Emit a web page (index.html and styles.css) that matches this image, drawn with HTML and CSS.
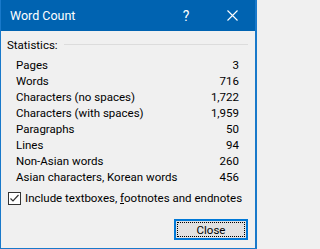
FILE: index.html
```html
<!DOCTYPE html>
<html>
<head>
<meta charset="utf-8">
<link rel="stylesheet" href="styles.css">
</head>
<body>
<div class="window">
  <div class="titlebar">
    <div class="title">Word Count</div>
    <div class="tb-btn help">?</div>
    <div class="tb-btn close">
      <svg width="11" height="11" viewBox="0 0 11 11"><path d="M0.5 0.5 L10.5 10.5 M10.5 0.5 L0.5 10.5" stroke="#fff" stroke-width="1.1" fill="none"/></svg>
    </div>
  </div>
  <div class="content">
    <div class="group-header"><span>Statistics:</span><div class="rule"></div></div>
    <div class="stats">
      <div class="row"><span>Pages</span><span>3</span></div>
      <div class="row"><span>Words</span><span>716</span></div>
      <div class="row"><span>Characters (no spaces)</span><span>1,722</span></div>
      <div class="row"><span>Characters (with spaces)</span><span>1,959</span></div>
      <div class="row"><span>Paragraphs</span><span>50</span></div>
      <div class="row"><span>Lines</span><span>94</span></div>
      <div class="row"><span>Non-Asian words</span><span>260</span></div>
      <div class="row"><span>Asian characters, Korean words</span><span>456</span></div>
    </div>
    <div class="check-row">
      <div class="checkbox">
        <svg width="11" height="11" viewBox="0 0 11 11"><path d="M1.5 5.5 L4 8 L9.5 2" stroke="#333" stroke-width="1.2" fill="none"/></svg>
      </div>
      <span class="check-label">Include textboxes, <u>f</u>ootnotes and endnotes</span>
    </div>
    <div class="footer">
      <div class="button"><div class="focus">Close</div></div>
    </div>
  </div>
</div>
</body>
</html>
```

FILE: styles.css
```css
html, body {
  margin: 0;
  padding: 0;
  background: #f0f0f0;
}
body {
  font-family: Roboto, "Noto Sans", sans-serif;
  font-size: 11.5px;
  color: #000;
}
.window {
  width: 257px;
  height: 249px;
  box-sizing: border-box;
  border-left: 1px solid #1979ca;
  border-right: 2px solid #1979ca;
  border-bottom: 1px solid #1979ca;
  background: #f0f0f0;
  display: flex;
  flex-direction: column;
  overflow: hidden;
}
.titlebar {
  height: 31px;
  background: #0063b1;
  color: #fff;
  display: flex;
  align-items: center;
  flex-shrink: 0;
}
.title {
  flex: 1;
  padding-left: 9px;
  font-size: 12.5px;
  line-height: 16px;
}
.tb-btn {
  width: 46px;
  height: 31px;
  display: flex;
  align-items: center;
  justify-content: center;
}
.help {
  font-size: 14px;
}
.content {
  padding: 6px 7px 0 6px;
}
.group-header {
  display: flex;
  align-items: center;
  line-height: 16px;
  gap: 6px;
}
.rule {
  flex: 1;
  height: 1px;
  background: #dcdcdc;
  margin-top: -1px;
}
.stats {
  margin-top: 4px;
  padding: 0 9px 0 9px;
}
.row {
  display: flex;
  justify-content: space-between;
  line-height: 16px;
}
.check-row {
  display: flex;
  align-items: center;
  gap: 4px;
  margin-top: 5px;
  line-height: 16px;
  margin-left: 1px;
  white-space: nowrap;
}
.checkbox {
  width: 13px;
  height: 13px;
  flex-shrink: 0;
  box-sizing: border-box;
  border: 1px solid #333;
  background: #fff;
  display: flex;
  align-items: center;
  justify-content: center;
}
.footer {
  display: flex;
  justify-content: flex-end;
  margin-top: 13px;
}
.button {
  width: 74px;
  height: 21px;
  box-sizing: border-box;
  border: 2px solid #0078d7;
  background: #e1e1e1;
  padding: 1px;
}
.focus {
  height: 100%;
  box-sizing: border-box;
  border: 1px dotted #000;
  display: flex;
  align-items: center;
  justify-content: center;
  line-height: 14px;
}
```
